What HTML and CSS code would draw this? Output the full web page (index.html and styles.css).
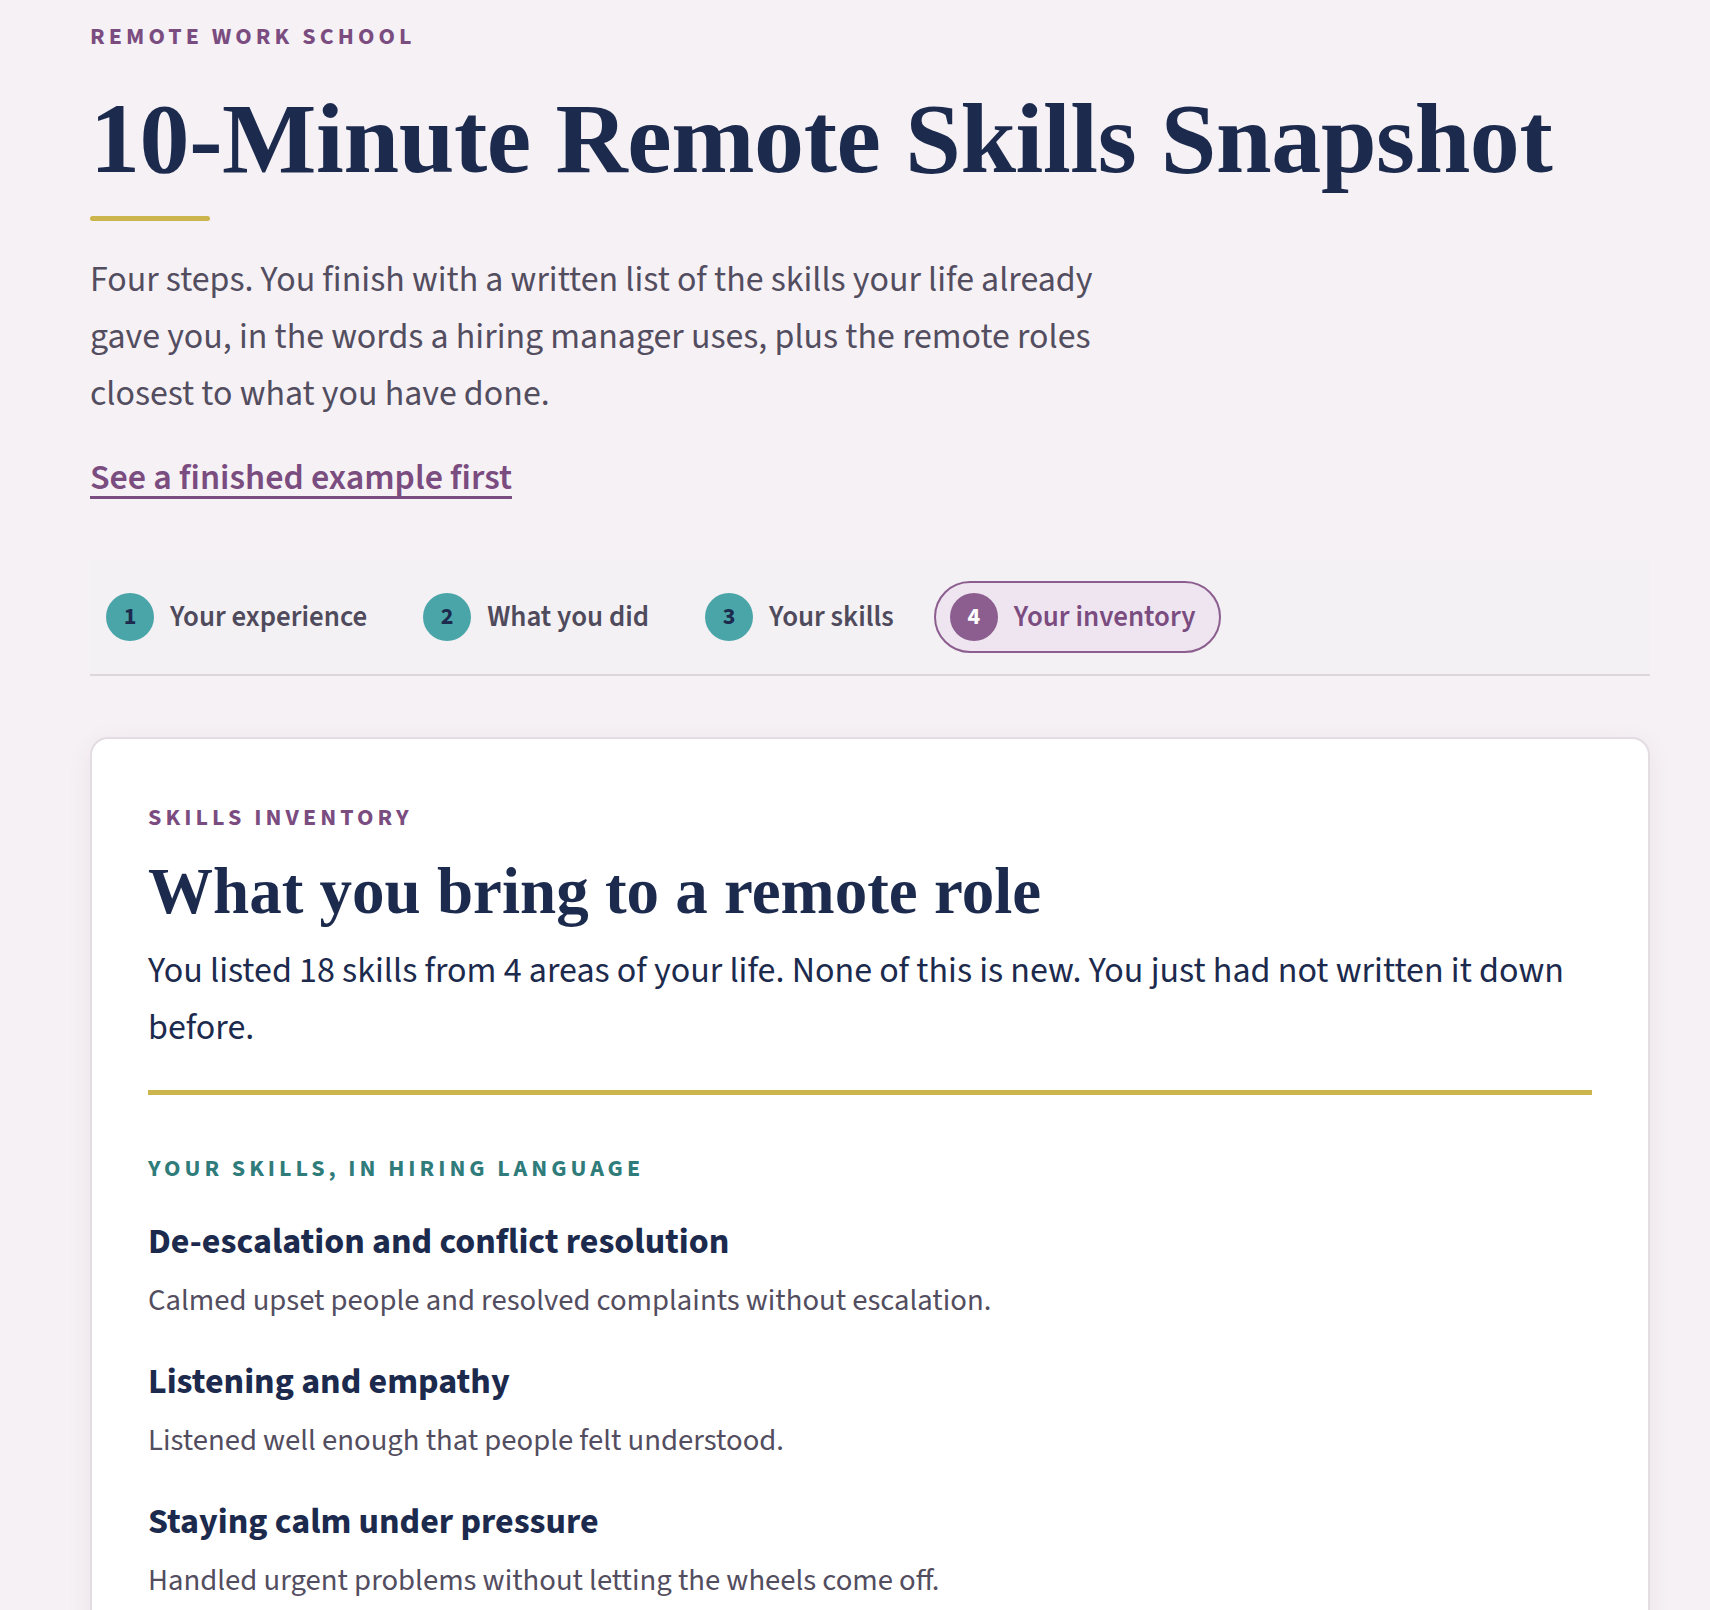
FILE: index.html
```html
<!DOCTYPE html>
<html lang="en">
<head>
<meta charset="utf-8">
<title>10-Minute Remote Skills Snapshot</title>
<link rel="stylesheet" href="styles.css">
</head>
<body>
<main class="page">
  <header class="intro">
    <p class="eyebrow">Remote Work School</p>
    <h1 class="title">10-Minute Remote Skills Snapshot</h1>
    <div class="title-bar"></div>
    <p class="lede">Four steps. You finish with a written list of the skills your life already gave you, in the words a hiring manager uses, plus the remote roles closest to what you have done.</p>
    <a class="example-link" href="#example">See a finished example first</a>
  </header>

  <nav class="stepper" aria-label="Progress">
    <div class="step done"><span class="step-num">1</span><span class="step-label">Your experience</span></div>
    <div class="step done"><span class="step-num">2</span><span class="step-label">What you did</span></div>
    <div class="step done"><span class="step-num">3</span><span class="step-label">Your skills</span></div>
    <div class="step current"><span class="step-num">4</span><span class="step-label">Your inventory</span></div>
  </nav>

  <section class="card">
    <p class="eyebrow">Skills inventory</p>
    <h2 class="card-title">What you bring to a remote role</h2>
    <p class="card-lede">You listed 18 skills from 4 areas of your life. None of this is new. You just had not written it down before.</p>
    <div class="card-rule"></div>

    <h3 class="section-label">Your skills, in hiring language</h3>
    <ul class="skills">
      <li class="skill">
        <p class="skill-name">De-escalation and conflict resolution</p>
        <p class="skill-desc">Calmed upset people and resolved complaints without escalation.</p>
      </li>
      <li class="skill">
        <p class="skill-name">Listening and empathy</p>
        <p class="skill-desc">Listened well enough that people felt understood.</p>
      </li>
      <li class="skill">
        <p class="skill-name">Staying calm under pressure</p>
        <p class="skill-desc">Handled urgent problems without letting the wheels come off.</p>
      </li>
    </ul>
  </section>
</main>
</body>
</html>
```

FILE: styles.css
```css
* { box-sizing: border-box; }

html, body {
  margin: 0;
  padding: 0;
  background: #f6f1f5;
}

body {
  font-family: "Source Sans 3", "Source Sans Pro", Lato, "Noto Sans", sans-serif;
  color: #1c2a4d;
}

p, h1, h2, h3, ul { margin: 0; padding: 0; }

.page {
  padding: 22px 60px 0 90px;
}

.eyebrow {
  font-size: 24px;
  line-height: 30px;
  font-weight: 700;
  letter-spacing: 0.17em;
  text-transform: uppercase;
  color: #7a4c7f;
}

.title {
  margin-top: 32px;
  font-family: "Liberation Serif", "Times New Roman", serif;
  font-weight: 700;
  font-size: 100px;
  line-height: 110px;
  color: #1c2a4d;
  letter-spacing: -0.004em;
}

.title-bar {
  margin-top: 22px;
  width: 120px;
  height: 5px;
  border-radius: 3px;
  background: #cbb54c;
}

.lede {
  margin-top: 30px;
  max-width: 1025px;
  font-size: 35.9px;
  line-height: 57px;
  color: #534d60;
}

.example-link {
  display: inline-block;
  margin-top: 27px;
  font-size: 36px;
  line-height: 57px;
  font-weight: 600;
  color: #7a4c7f;
  text-decoration: underline;
  text-decoration-thickness: 3px;
  text-underline-offset: 7px;
}

.stepper {
  margin-top: 53px;
  height: 117px;
  display: flex;
  align-items: center;
  gap: 14px;
  background: #f3f1f3;
  border-bottom: 2px solid #ddd6dc;
}

.step {
  display: flex;
  align-items: center;
  gap: 16px;
  padding: 10px 24px 10px 14px;
  border: 2px solid transparent;
  border-radius: 999px;
}

.step-num {
  width: 48px;
  height: 48px;
  border-radius: 50%;
  display: flex;
  align-items: center;
  justify-content: center;
  font-size: 24px;
  font-weight: 700;
  background: #4aa5a9;
  color: #1c2a4d;
}

.step-label {
  font-size: 28.9px;
  font-weight: 600;
  color: #4f4a5c;
}

.step.current {
  border-color: #8b5e8f;
  background: #efe5f0;
}

.step.current .step-num {
  background: #8b5e8f;
  color: #ffffff;
}

.step.current .step-label {
  color: #7a4c7f;
}

.card {
  margin-top: 61px;
  background: #ffffff;
  border: 2px solid #e3dce2;
  border-radius: 18px;
  padding: 64px 56px 60px 56px;
  box-shadow: 0 6px 28px rgba(70, 40, 70, 0.06);
}

.card-title {
  margin-top: 21px;
  font-family: "Liberation Serif", "Times New Roman", serif;
  font-weight: 700;
  font-size: 65px;
  line-height: 74px;
  color: #1c2a4d;
}

.card-lede {
  margin-top: 14px;
  font-size: 36px;
  line-height: 57px;
  color: #1c2a4d;
}

.card-rule {
  margin-top: 34px;
  height: 5px;
  background: #cbb54c;
}

.section-label {
  margin-top: 59px;
  font-size: 24px;
  line-height: 30px;
  font-weight: 700;
  letter-spacing: 0.165em;
  text-transform: uppercase;
  color: #2f7c7b;
}

.skills {
  list-style: none;
  margin-top: 38px;
  display: flex;
  flex-direction: column;
  gap: 41px;
}

.skill-name {
  font-size: 36px;
  line-height: 40px;
  font-weight: 700;
  color: #1c2a4d;
}

.skill-desc {
  margin-top: 19px;
  font-size: 30.7px;
  line-height: 40px;
  color: #534d60;
}
```
